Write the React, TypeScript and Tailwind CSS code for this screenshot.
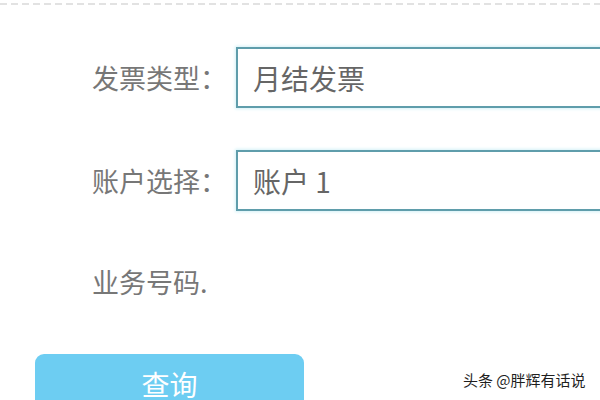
import React from 'react';

const cjk = "font-['Noto_Sans_CJK_SC','Noto_Sans',sans-serif]";

type FieldProps = { label: string; value: string };

const SelectField: React.FC<FieldProps> = ({ label, value }) => (
  <div className="flex items-center pl-[92px]">
    <span className="w-[144px] shrink-0 text-[27px] leading-none text-[#777] whitespace-nowrap">
      {label}
    </span>
    <div className="flex h-[61px] w-[420px] shrink-0 items-center border-2 border-[#5f9dab] pl-[15px] shadow-[0_0_3px_1px_#d4f1f7] text-[28px] text-[#666] whitespace-nowrap">
      {value}
    </div>
  </div>
);

const App: React.FC = () => {
  return (
    <div className={`relative h-[400px] w-[600px] overflow-hidden bg-white ${cjk}`}>
      {/* dashed divider along the top */}
      <div className="mt-[3px] h-[2px] bg-[repeating-linear-gradient(90deg,#e2e2e2_0_7px,transparent_7px_11px)]" />

      <div className="mt-[42px]">
        <SelectField label="发票类型：" value="月结发票" />
      </div>

      <div className="mt-[42px]">
        <SelectField label="账户选择：" value="账户 1" />
      </div>

      <div className="mt-[57px] flex items-center pl-[92px]">
        <span className="text-[27px] leading-none text-[#777]">业务号码.</span>
      </div>

      <div className="mt-[59px] pl-[35px]">
        <button className="flex h-[60px] w-[269px] items-start justify-center rounded-[9px] bg-[#6dcdf2] pt-[16px] text-[28px] leading-none text-white">
          查询
        </button>
      </div>

      <span className="absolute left-[463px] top-[372px] text-[15px] leading-none text-[#1f1f1f] [text-shadow:0_0_2px_#fff,0_0_2px_#fff]">
        头条 @胖辉有话说
      </span>
    </div>
  );
};

export default App;
